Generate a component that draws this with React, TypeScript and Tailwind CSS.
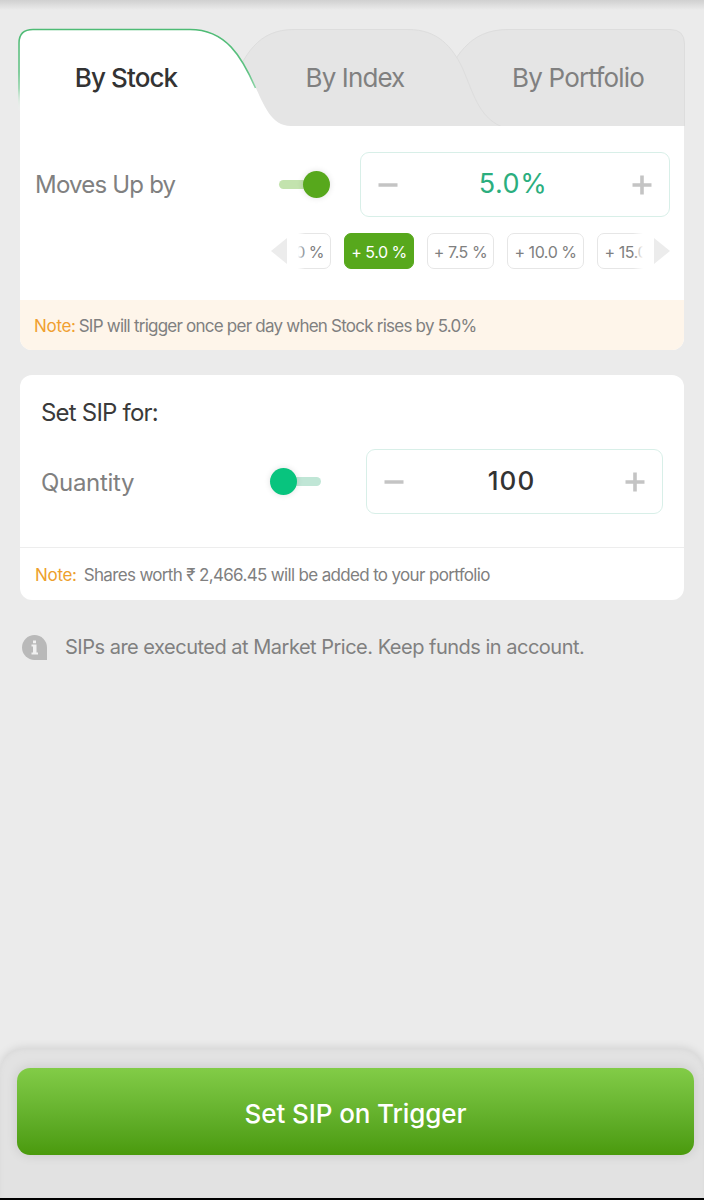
import { useState } from 'react';
import clsx from 'clsx';

const tabs = [
  { id: 'stock', label: 'By Stock', box: 'w-[252px]', text: 'font-medium text-[#333333] tracking-[-0.9px]' },
  { id: 'index', label: 'By Index', box: 'w-[206px]', text: 'text-[#808080] tracking-[-0.9px]' },
  { id: 'portfolio', label: 'By Portfolio', box: 'w-[240px]', text: 'text-[#808080] tracking-[-0.8px]' },
];

const steps = [
  { label: '+ 2.0 %', box: 'w-[70px]' },
  { label: '+ 5.0 %', box: 'w-[70px]' },
  { label: '+ 7.5 %', box: 'w-[67px]' },
  { label: '+ 10.0 %', box: 'w-[77px]' },
  { label: '+ 15.0 %', box: 'w-[77px]' },
];

function TabShapes() {
  return (
    <svg className="absolute inset-0" width="704" height="98" viewBox="0 28 704 98" fill="none">
      <defs>
        <linearGradient id="tabLine" x1="0" y1="28" x2="0" y2="126" gradientUnits="userSpaceOnUse">
          <stop offset="0" stopColor="#4dbb74" />
          <stop offset="0.45" stopColor="#5fc283" />
          <stop offset="0.62" stopColor="#8fd5a8" />
          <stop offset="0.85" stopColor="#ffffff" stopOpacity="0" />
        </linearGradient>
      </defs>
      <path
        d="M440 127V90C454 58 468 29.500 508 29.500H670Q684.500 29.500 684.500 44V127"
        fill="#e5e5e5"
        stroke="#dddddd"
      />
      <path
        d="M230 127V90C244 54 258 29.500 294 29.500H408C438 29.500 452 47 462 67C473 92 478 116 501 126.500"
        fill="#e5e5e5"
        stroke="#dddddd"
      />
      <path d="M20 126V42Q20 30 33 30H190C226 30 242 58 254 84C264 105 271 126 291 126Z" fill="#ffffff" />
      <path
        d="M19 126V43Q19 29.500 33 29.500H190C226 29.500 242 57 255.500 88"
        stroke="url(#tabLine)"
        strokeWidth="1.500"
      />
    </svg>
  );
}

function Stepper({ value, box, text }: { value: string; box: string; text: string }) {
  return (
    <div className={clsx('flex h-[65px] items-center justify-between rounded-[9px] border-[1.500px] border-[#d8efe8] pr-[17px] pl-[17px]', box)}>
      <button aria-label="Decrease">
        <svg width="20" height="20" viewBox="0 0 20 20">
          <path d="M0.500 10H19.500" stroke="#c4c4c4" strokeWidth="3.600" />
        </svg>
      </button>
      <span className={text}>{value}</span>
      <button aria-label="Increase">
        <svg width="20" height="20" viewBox="0 0 20 20">
          <path d="M0.500 10H19.500M10 0.500V19.500" stroke="#c4c4c4" strokeWidth="3.600" />
        </svg>
      </button>
    </div>
  );
}

export default function App() {
  const [activeStep, setActiveStep] = useState('+ 5.0 %');

  return (
    <div className="flex h-[1200px] w-[704px] flex-col overflow-hidden bg-[#ebebeb] font-['Inter','Liberation_Sans',sans-serif] text-[#808080]">
      <div className="h-[10px] shrink-0 bg-linear-to-b from-[#d0d0d0] to-[#ebebeb]" />

      {/* TABS */}
      <div className="relative mt-[18px] h-[98px] shrink-0">
        <TabShapes />
        <div className="relative flex h-full pt-[1px]">
          {tabs.map((tab) => (
            <button key={tab.id} className={clsx('text-center text-[26px] whitespace-nowrap', tab.box, tab.text)}>
              {tab.label}
            </button>
          ))}
        </div>
      </div>

      {/* TRIGGER */}
      <div className="mx-5 shrink-0 overflow-hidden rounded-b-[12px] bg-white">
        <div className="h-[174px] pt-[26px]">
          <div className="flex items-center pr-[14px] pl-[15px]">
            <span className="w-[244px] text-[24px] tracking-[-0.8px]">Moves Up by</span>
            <button className="flex w-[51px] items-center" aria-label="Direction">
              <span className="h-[9px] w-[32px] rounded-full bg-[#c3e3ae]" />
              <span className="-ml-[8px] h-[27px] w-[27px] rounded-full bg-[#57a81c] shadow-[0_0_6px_rgba(0,0,0,0.12)]" />
            </button>
            <div className="ml-auto">
              <Stepper value="5.0%" box="w-[310px]" text="mr-[4px] text-[27px] text-[#2bae7e] tracking-[0.6px]" />
            </div>
          </div>

          <div className="mt-[16px] ml-[251px] flex items-center">
            <svg width="16" height="28" viewBox="0 0 16 28">
              <path d="M0 14L16 1V27Z" fill="#ececec" />
            </svg>
            <div className="relative flex w-[356px] justify-start overflow-hidden">
              <div className="-ml-[26px] flex shrink-0 gap-[13px]">
                {steps.map((step) => (
                  <button
                    key={step.label}
                    onClick={() => setActiveStep(step.label)}
                    className={clsx(
                      'h-[36px] shrink-0 rounded-[7px] border pt-[2px] text-[16px] tracking-[-0.45px] whitespace-nowrap',
                      step.box,
                      activeStep === step.label
                        ? 'border-[#57a81c] bg-[#57a81c] text-white'
                        : 'border-[#e6e6e6] bg-white text-[#808080]',
                    )}
                  >
                    {step.label}
                  </button>
                ))}
              </div>
              <div className="absolute inset-y-0 left-0 w-[18px] bg-linear-to-r from-white from-60% to-white/0" />
              <div className="absolute inset-y-0 right-0 w-[10px] bg-linear-to-r from-white/0 to-white" />
            </div>
            <svg className="ml-[11px]" width="16" height="28" viewBox="0 0 16 28">
              <path d="M16 14L0 1V27Z" fill="#ececec" />
            </svg>
          </div>
        </div>
        <div className="flex h-[50px] items-center bg-[#fef5ea] pt-[4px] pl-[14px] text-[17px] whitespace-nowrap">
          <span className="mr-[3px] tracking-[-0.3px] text-[#f0a030]">Note:</span>
          <span className="tracking-[-0.77px]">SIP will trigger once per day when Stock rises by 5.0%</span>
        </div>
      </div>

      {/* QUANTITY */}
      <div className="mx-5 mt-[25px] shrink-0 overflow-hidden rounded-[12px] bg-white">
        <div className="h-[173px] border-b border-[#ededed] pt-[21px]">
          <h2 className="pl-[21px] text-[24px] leading-[34px] tracking-[-0.8px] text-[#3a3a3a]">Set SIP for:</h2>
          <div className="mt-[19px] flex items-center pr-[21px] pl-[21px]">
            <span className="w-[229px] pt-[2px] text-[24px] tracking-[-0.3px]">Quantity</span>
            <button className="flex w-[51px] items-center" aria-label="Quantity or amount">
              <span className="z-10 h-[27px] w-[27px] rounded-full bg-[#08c47e] shadow-[0_0_6px_rgba(0,0,0,0.12)]" />
              <span className="-ml-[8px] h-[9px] w-[32px] rounded-full bg-[#c0e6d6]" />
            </button>
            <div className="ml-auto">
              <Stepper value="100" box="w-[297px]" text="mb-[3px] mr-[6px] text-[26px] font-medium text-[#333333] tracking-[1.1px]" />
            </div>
          </div>
        </div>
        <div className="flex h-[52px] items-center pt-[4px] pl-[15px] text-[17px] whitespace-nowrap">
          <span className="mr-[7px] tracking-[-0.3px] text-[#eda02c]">Note:</span>
          <span className="tracking-[-0.66px]">Shares worth ₹ 2,466.45 will be added to your portfolio</span>
        </div>
      </div>

      <div className="mt-[32px] flex h-[30px] shrink-0 items-center pl-[22px]">
        <svg width="25" height="25" viewBox="0 0 25 25">
          <path d="M12.500 0A12.500 12.500 0 0 1 25 12.500V25H12.500A12.500 12.500 0 0 1 12.500 0Z" fill="#b9b9b9" />
          <path d="M9.500 9.500H14.500V17.500H16V19.500H9.500V17.500H11V11.500H9.500ZM11 5.500H14V8.300H11Z" fill="#f1f1f1" />
        </svg>
        <span className="ml-[18px] text-[20px] tracking-[-0.5px] whitespace-nowrap">
          SIPs are executed at Market Price. Keep funds in account.
        </span>
      </div>

      {/* FOOTER */}
      <div className="mt-auto h-[152px] shrink-0 rounded-t-[24px] border-b-2 border-black bg-[#e2e2e2] pt-[20px] pl-[17px] shadow-[0_0_10px_rgba(0,0,0,0.12),inset_0_2px_4px_#dadada]">
        <button className="h-[87px] w-[677px] rounded-[13px] bg-linear-to-b from-[#82cc47] to-[#4a9a0b] pt-[3px] text-[26px] font-medium tracking-[-0.1px] text-white shadow-[0_0_12px_rgba(0,0,0,0.12)]">
          Set SIP on Trigger
        </button>
      </div>
    </div>
  );
}
